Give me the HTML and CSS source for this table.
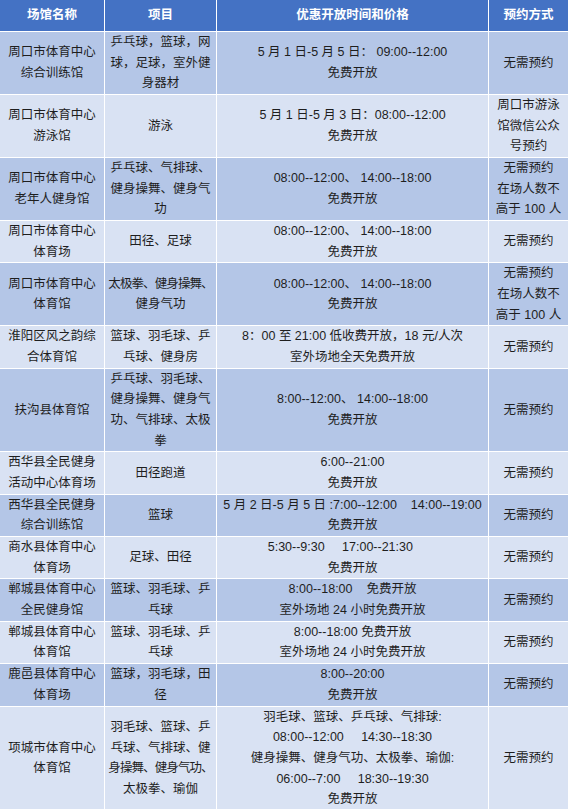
FILE: index.html
```html
<!DOCTYPE html>
<html lang="zh-CN">
<head>
<meta charset="utf-8">
<title>场馆开放信息</title>
<link rel="stylesheet" href="styles.css">
</head>
<body>
<table class="tbl">
  <colgroup>
    <col class="c1"><col class="c2"><col class="c3"><col class="c4">
  </colgroup>
  <thead>
    <tr><th>场馆名称</th><th>项目</th><th>优惠开放时间和价格</th><th>预约方式</th></tr>
  </thead>
  <tbody>
    <tr>
      <td>周口市体育中心<br>综合训练馆</td>
      <td>乒乓球，篮球，网<br>球，足球，室外健<br>身器材</td>
      <td>5 月 1 日-5 月 5 日： 09:00--12:00<br>免费开放</td>
      <td>无需预约</td>
    </tr>
    <tr>
      <td>周口市体育中心<br>游泳馆</td>
      <td>游泳</td>
      <td>5 月 1 日-5 月 3 日：08:00--12:00<br>免费开放</td>
      <td>周口市游泳<br>馆微信公众<br>号预约</td>
    </tr>
    <tr>
      <td>周口市体育中心<br>老年人健身馆</td>
      <td>乒乓球、气排球、<br>健身操舞、健身气<br>功</td>
      <td>08:00--12:00、 14:00--18:00<br>免费开放</td>
      <td>无需预约<br>在场人数不<br>高于 100 人</td>
    </tr>
    <tr>
      <td>周口市体育中心<br>体育场</td>
      <td>田径、足球</td>
      <td>08:00--12:00、 14:00--18:00<br>免费开放</td>
      <td>无需预约</td>
    </tr>
    <tr>
      <td>周口市体育中心<br>体育馆</td>
      <td><span class="tight">太极拳、健身操舞、</span><br>健身气功</td>
      <td>08:00--12:00、 14:00--18:00<br>免费开放</td>
      <td>无需预约<br>在场人数不<br>高于 100 人</td>
    </tr>
    <tr>
      <td>淮阳区风之韵综<br>合体育馆</td>
      <td>篮球、羽毛球、乒<br>乓球、健身房</td>
      <td>8：00 至 21:00 低收费开放，18 元/人次<br>室外场地全天免费开放</td>
      <td>无需预约</td>
    </tr>
    <tr>
      <td>扶沟县体育馆</td>
      <td>乒乓球、羽毛球、<br>健身操舞、健身气<br>功、气排球、太极<br>拳</td>
      <td>8:00--12:00、 14:00--18:00<br>免费开放</td>
      <td>无需预约</td>
    </tr>
    <tr>
      <td>西华县全民健身<br>活动中心体育场</td>
      <td>田径跑道</td>
      <td>6:00--21:00<br>免费开放</td>
      <td>无需预约</td>
    </tr>
    <tr>
      <td>西华县全民健身<br>综合训练馆</td>
      <td>篮球</td>
      <td>5 月 2 日-5 月 5 日 :7:00--12:00&nbsp;&nbsp;&nbsp; 14:00--19:00<br>免费开放</td>
      <td>无需预约</td>
    </tr>
    <tr>
      <td>商水县体育中心<br>体育场</td>
      <td>足球、田径</td>
      <td>5:30--9:30&nbsp;&nbsp;&nbsp;&nbsp; 17:00--21:30&nbsp;&nbsp;&nbsp;&nbsp;&nbsp;&nbsp;&nbsp;<br>免费开放</td>
      <td>无需预约</td>
    </tr>
    <tr>
      <td>郸城县体育中心<br>全民健身馆</td>
      <td>篮球、羽毛球、乒<br>乓球</td>
      <td>8:00--18:00&nbsp;&nbsp;&nbsp; 免费开放<br>室外场地 24 小时免费开放</td>
      <td>无需预约</td>
    </tr>
    <tr>
      <td>郸城县体育中心<br>体育馆</td>
      <td>篮球、羽毛球、乒<br>乓球</td>
      <td>8:00--18:00 免费开放<br>室外场地 24 小时免费开放</td>
      <td>无需预约</td>
    </tr>
    <tr>
      <td>鹿邑县体育中心<br>体育场</td>
      <td>篮球，羽毛球，田<br>径</td>
      <td>8:00--20:00<br>免费开放</td>
      <td>无需预约</td>
    </tr>
    <tr>
      <td>项城市体育中心<br>体育馆</td>
      <td>羽毛球、篮球、乒<br>乓球、气排球、健<br><span class="tight">身操舞、健身气功、</span><br>太极拳、瑜伽</td>
      <td>羽毛球、篮球、乒乓球、气排球:<br>08:00--12:00&nbsp;&nbsp;&nbsp;&nbsp; 14:30--18:30<br>健身操舞、健身气功、太极拳、瑜伽:<br>06:00--7:00&nbsp;&nbsp;&nbsp;&nbsp; 18:30--19:30<br>免费开放</td>
      <td>无需预约</td>
    </tr>
  </tbody>
</table>
</body>
</html>
```

FILE: styles.css
```css
html {
  overflow: hidden;
}

body {
  margin: 0;
  background: #ffffff;
  font-family: "Liberation Sans", "Noto Sans CJK SC", sans-serif;
  font-size: 12.5px;
  color: #1e1e1e;
}

.tbl {
  width: 568px;
  table-layout: fixed;
  border-collapse: separate;
  border-spacing: 0;
}

.c1 { width: 104px; }
.c2 { width: 112px; }
.c3 { width: 272px; }
.c4 { width: 80px; }

.tbl th,
.tbl td {
  padding: 0 3px;
  text-align: center;
  vertical-align: middle;
  border-left: 1px solid #ffffff;
  border-top: 1px solid #ffffff;
  white-space: nowrap;
  line-height: 20.67px;
}

.tbl th:first-child,
.tbl td:first-child {
  border-left: none;
}

.tbl th {
  border-top: none;
  background: #4472c4;
  color: #ffffff;
  font-weight: bold;
  padding-top: 5px;
  padding-bottom: 5px;
  line-height: 21px;
}

.tbl tbody tr:nth-child(odd) td {
  background: #b4c6e7;
}

.tbl tbody tr:nth-child(even) td {
  background: #d9e2f3;
}

.tight {
  letter-spacing: -0.9px;
}
```
